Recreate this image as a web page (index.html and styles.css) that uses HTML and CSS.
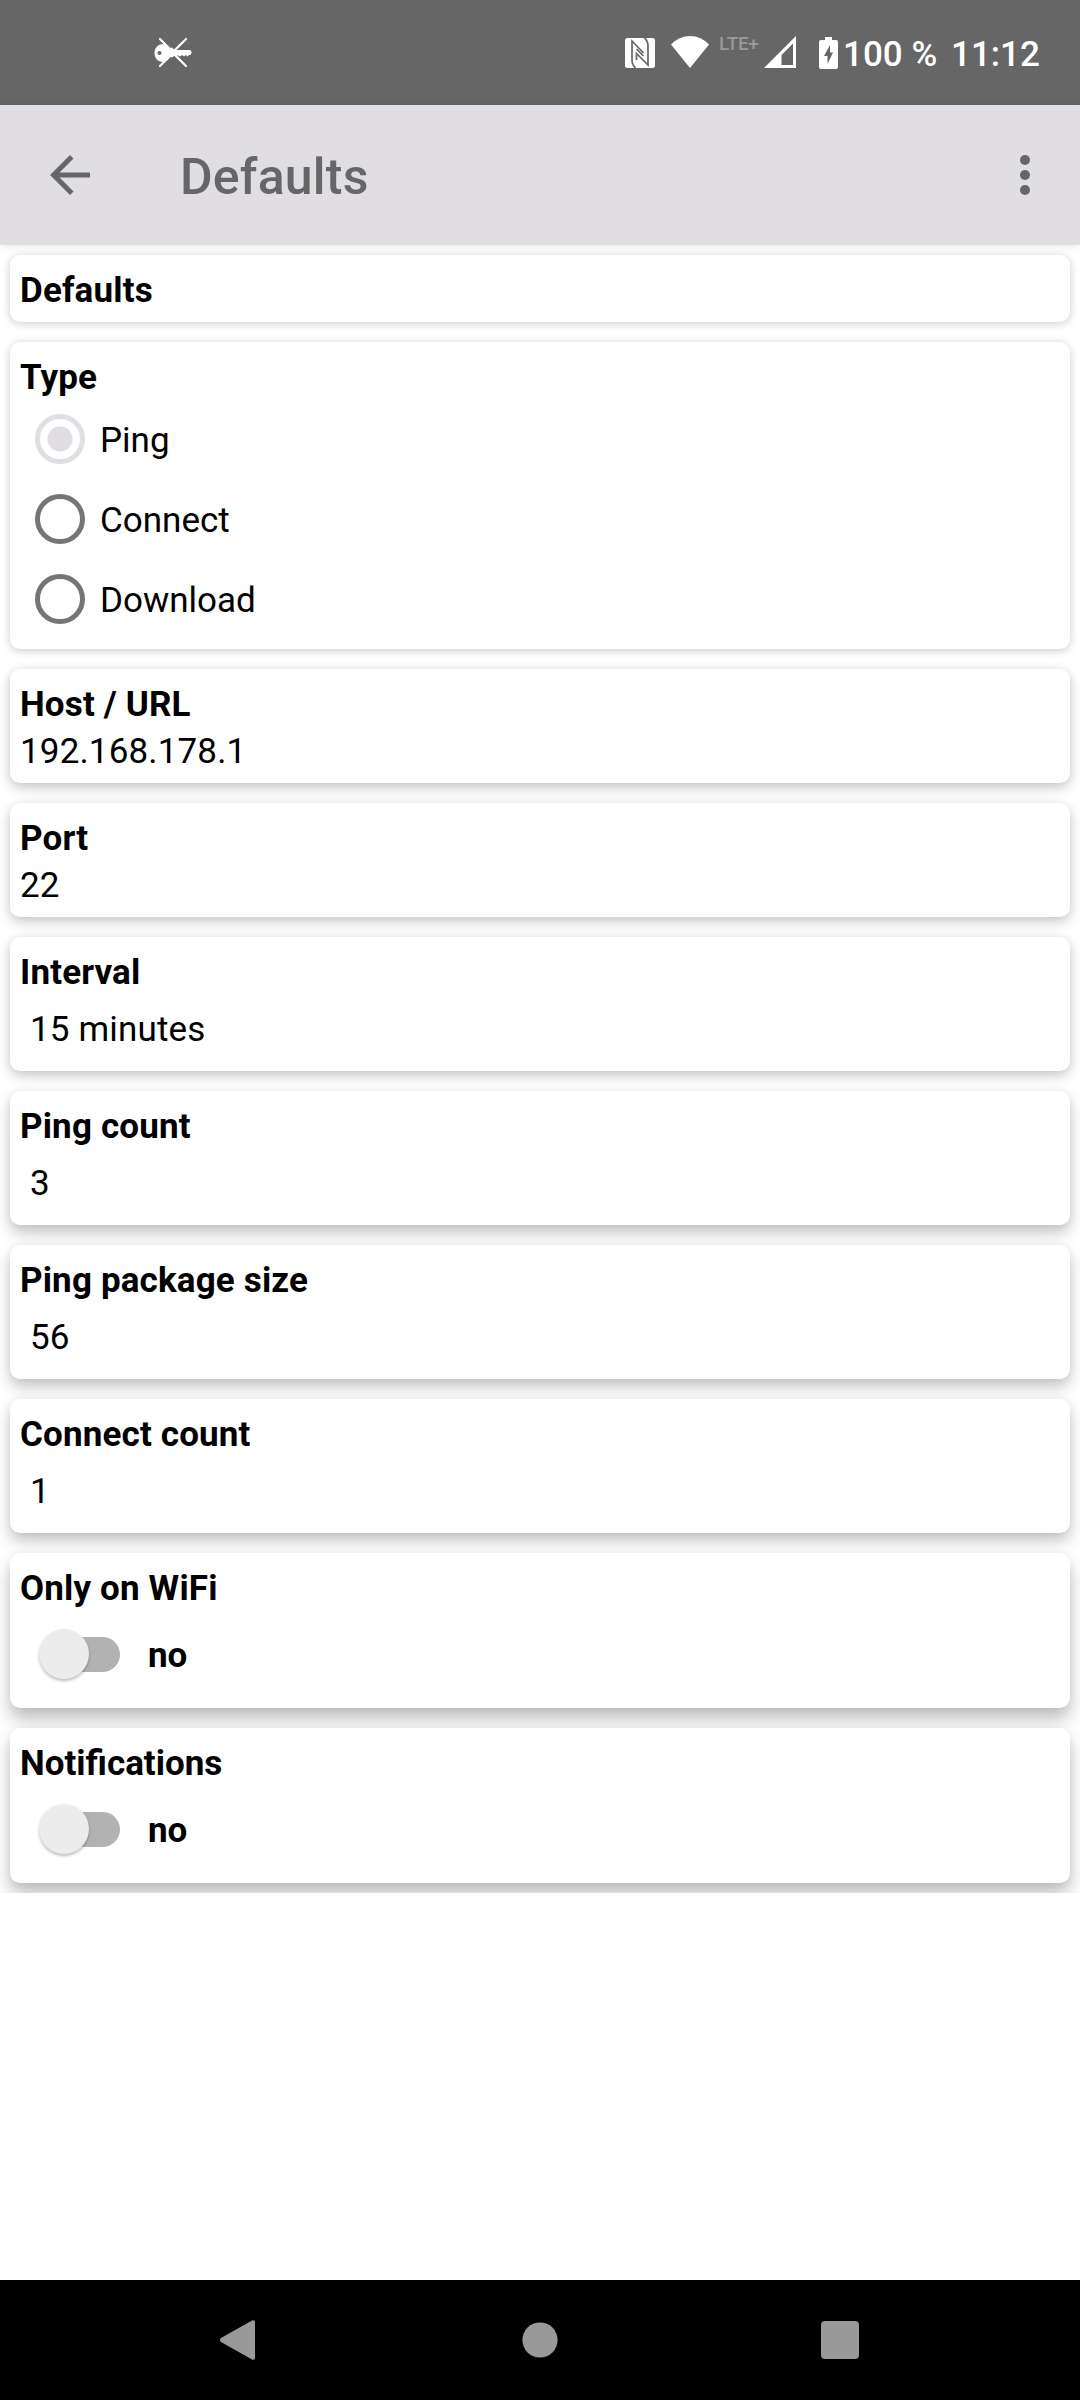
FILE: index.html
```html
<!DOCTYPE html>
<html lang="en">
<head>
<meta charset="utf-8">
<title>Defaults</title>
<link rel="stylesheet" href="styles.css">
</head>
<body>
<div class="screen">
  <div class="status">
    <svg class="s-key" width="40" height="32" viewBox="0 0 40 32">
      <path d="M7 2L17 12M33 2L20 15M7 29L17 19M33 29L20 16" stroke="#fff" stroke-width="2.2" stroke-linecap="round"/>
      <path fill="#fff" fill-rule="evenodd" d="M10 7C13 7 15.500 8.500 17 11L19 10.500L20.500 12L22 13H36Q38.500 13 38.500 15.500Q38.500 18 36 18L34.500 19.500L33 18L31 19.500L29 18L27 19.500L25 18.500L23 18L20.500 19.500L19 20.500L17 20C15.500 22.500 13 25 10 25C5 25 1.500 21 1.500 16S5 7 10 7ZM6.500 14A2 2 0 1 0 6.500 18A2 2 0 1 0 6.500 14Z"/>
    </svg>
    <svg class="s-nfc" width="30" height="30" viewBox="0 0 30 30">
      <rect width="30" height="30" rx="2.500" fill="#fff"/>
      <path d="M10.500 30Q7 27 7 22V3L18.500 15M19.500 0Q23 3 23 8V27L11.500 15.500V22M11.500 11L18.500 18" fill="none" stroke="#666" stroke-width="1.700"/>
    </svg>
    <svg class="s-wifi" width="38" height="32" viewBox="0 0 38 32"><path fill="#fff" d="M0 8.500Q8 0 19 0T38 8.500L19 32Z"/></svg>
    <span class="lte">LTE+</span>
    <svg class="s-signal" width="32" height="32" viewBox="0 0 32 32"><path fill="#fff" fill-rule="evenodd" d="M32 0V32H0ZM29 7.500L17.500 19V29H29Z"/></svg>
    <svg class="s-batt" width="19" height="32" viewBox="0 0 19 32"><path fill="#fff" fill-rule="evenodd" d="M6 0H13V3H17Q19 3 19 5V30Q19 32 17 32H2Q0 32 0 30V5Q0 3 2 3H6ZM11 8L5 19H8.500V27L14 15.500H11Z"/></svg>
    <span class="pct">100&nbsp;%</span>
    <span class="clock">11:12</span>
  </div>
  <header class="appbar">
    <svg width="40" height="40" viewBox="0 0 40 40"><path fill="#666" d="M40 17.500H9.600L23.500 3.500L20 0L0 20L20 40L23.500 36.500L9.600 22.500H40Z"/></svg>
    <h1 class="title">Defaults</h1>
    <svg width="10" height="40" viewBox="0 0 10 40" fill="#666"><circle cx="5" cy="5" r="5"/><circle cx="5" cy="20" r="5"/><circle cx="5" cy="35" r="5"/></svg>
  </header>
  <main class="list">
    <section class="card"><h2>Defaults</h2></section>
    <section class="card">
      <h2>Type</h2>
      <div class="radio"><i class="ring checked"></i><span>Ping</span></div>
      <div class="radio"><i class="ring"></i><span>Connect</span></div>
      <div class="radio"><i class="ring"></i><span>Download</span></div>
    </section>
    <section class="card mid"><h2>Host / URL</h2><p>192.168.178.1</p></section>
    <section class="card mid"><h2>Port</h2><p>22</p></section>
    <section class="card mid"><h2>Interval</h2><p class="inset">15 minutes</p></section>
    <section class="card low"><h2>Ping count</h2><p class="inset">3</p></section>
    <section class="card low"><h2>Ping package size</h2><p class="inset">56</p></section>
    <section class="card low"><h2>Connect count</h2><p class="inset">1</p></section>
    <section class="card lowest"><h2>Only on WiFi</h2><div class="toggle"><span class="track"><i class="thumb"></i></span><span>no</span></div></section>
    <section class="card lowest"><h2 class="ligature">Notifications</h2><div class="toggle"><span class="track"><i class="thumb"></i></span><span>no</span></div></section>
  </main>
  <nav class="nav">
    <svg width="36" height="40" viewBox="0 0 36 40"><path fill="#999" d="M1 18L32 .5Q35 -.5 35 2V38Q35 40.500 32 39.500L1 22Q-1 20 1 18Z"/></svg>
    <svg width="36" height="36" viewBox="0 0 36 36"><circle cx="18" cy="18" r="17.600" fill="#999"/></svg>
    <svg width="38" height="38" viewBox="0 0 38 38"><rect width="38" height="38" rx="4" fill="#999"/></svg>
  </nav>
</div>
</body>
</html>
```
FILE: styles.css
```css
* { box-sizing: border-box; }
body { margin: 0; background: #fff; font-family: Roboto, sans-serif; color: #000; }
h1, h2, p { margin: 0; }
svg { display: block; flex: none; }

.screen { width: 1080px; height: 2400px; display: flex; flex-direction: column; }

.status { height: 105px; flex: none; background: #666; color: #fff; display: flex; align-items: flex-start; padding-left: 153px; font-size: 35px; font-weight: 500; line-height: 41px; white-space: nowrap; }
.s-key { margin-top: 37px; }
.s-nfc { margin: 38px 0 0 432px; }
.s-wifi { margin: 36px 0 0 16px; }
.lte { width: 45px; margin: 33px 0 0 10px; font-size: 19px; line-height: 22px; letter-spacing: -.3px; color: #999; }
.s-signal { margin: 36px 0 0 0; }
.s-batt { margin: 37px 0 0 23px; }
.pct { width: 108px; margin: 34px 0 0 5px; }
.clock { margin: 34px 0 0 0; }

.appbar { position: relative; z-index: 1; height: 140px; flex: none; background: #e0dee3; display: flex; align-items: center; padding: 0 50px; box-shadow: 0 1px 8px rgba(0, 0, 0, .1); }
.title { flex: 1; margin-left: 90px; padding-top: 3px; font-size: 50px; font-weight: 500; line-height: 60px; letter-spacing: .2px; color: #666; }

.list { flex: none; display: flex; flex-direction: column; gap: 20px; padding: 10px; overflow: hidden; }
.card { padding: 10px; border-radius: 10px; background: #fff; font-size: 35px; line-height: 47px; box-shadow: 0 2px 10px rgba(0, 0, 0, .16), 0 0 8px rgba(0, 0, 0, .06); }
.card.mid { box-shadow: 0 5px 13px rgba(0, 0, 0, .2), 0 0 8px rgba(0, 0, 0, .06); }
.card.low { box-shadow: 0 8px 15px rgba(0, 0, 0, .23), 0 0 8px rgba(0, 0, 0, .05); }
.card.lowest { box-shadow: 0 11px 17px rgba(0, 0, 0, .26), 0 0 8px rgba(0, 0, 0, .05); }
.card h2, .card p { padding-top: 4px; line-height: 43px; letter-spacing: .15px; }
.card h2 { font-size: 35px; font-weight: 700; }
.card .ligature { letter-spacing: normal; }
.card .inset { padding: 14px 10px 10px; }

.radio { display: flex; align-items: center; gap: 15px; height: 80px; padding-left: 15px; }
.radio span, .toggle > span:last-child { padding-top: 2px; }
.ring { width: 50px; height: 50px; border: 5px solid #757575; border-radius: 50%; }
.ring.checked { border-color: #e0dee3; background: radial-gradient(circle, #e0dee3 12px, transparent 13px); }

.toggle { display: flex; align-items: center; gap: 28px; height: 88px; padding-left: 19px; font-weight: 700; }
.track { display: flex; align-items: center; width: 81px; height: 35px; border-radius: 18px; background: linear-gradient(to right, transparent 20px, #b2b2b2 20px); }
.thumb { flex: none; width: 50px; height: 50px; border-radius: 50%; background: #ececec; box-shadow: 0 2px 3px rgba(0, 0, 0, .26); }

.nav { flex: none; height: 120px; margin-top: auto; background: #000; display: flex; align-items: center; justify-content: space-between; padding: 0 221px 0 220px; }
.nav svg:nth-child(2) { margin-left: 2px; }
```
